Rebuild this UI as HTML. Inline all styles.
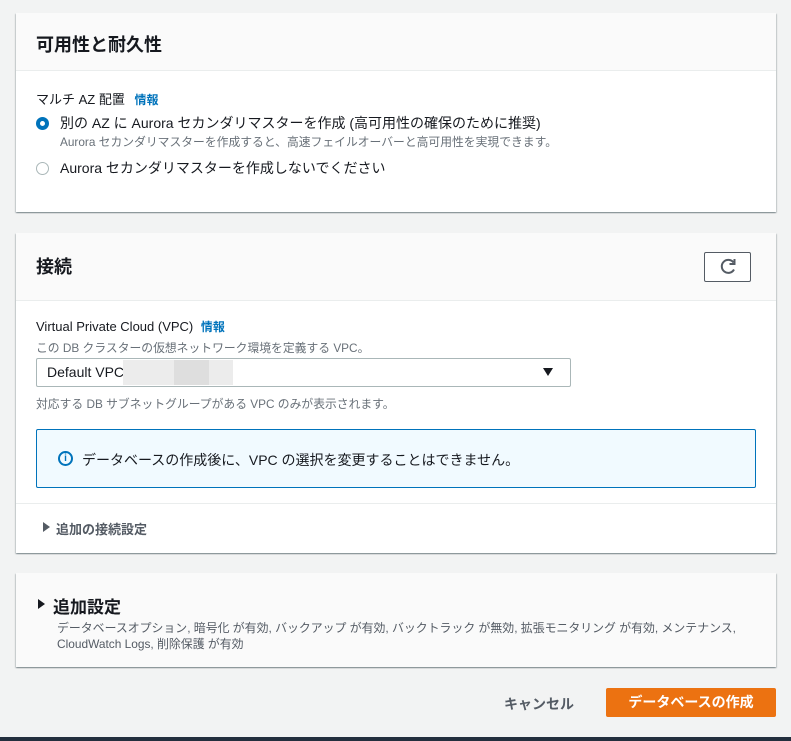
<!DOCTYPE html>
<html><head><meta charset="utf-8"><style>
*{margin:0;padding:0;box-sizing:border-box}
body{width:791px;height:741px;background:#f2f3f3;font-family:"Liberation Sans","Noto Sans CJK JP",sans-serif;color:#16191f;position:relative;overflow:hidden}
.a{position:absolute;white-space:nowrap}
.panel{position:absolute;left:16px;width:760px;background:#fff;box-shadow:0 1px 1px rgba(0,28,36,.3),1px 1px 1px rgba(0,28,36,.15),-1px 1px 1px rgba(0,28,36,.15)}
.hd{position:absolute;left:0;top:0;width:100%;background:#fafafa;border-bottom:1px solid #eaeded}
.h2{font-size:18px;font-weight:bold}
.lbl{font-size:14px}
.info{color:#0073bb;font-size:12px;font-weight:bold}
.desc{font-size:11.8px;color:#687078}
</style></head><body>
<div class="panel" style="top:13px;height:199px">
 <div class="hd" style="height:58px"></div>
 <div class="a h2" style="left:20px;top:18px">可用性と耐久性</div>
 <div class="a lbl" style="left:20px;top:76px;font-size:13px">マルチ AZ 配置 <span class="info" style="margin-left:6px">情報</span></div>
 <div class="a" style="left:20px;top:104px;width:13px;height:13px;border-radius:50%;border:4px solid #0073bb"></div>
 <div class="a lbl" style="left:44px;top:100px">別の AZ に Aurora セカンダリマスターを作成 (高可用性の確保のために推奨)</div>
 <div class="a desc" style="left:44px;top:120px">Aurora セカンダリマスターを作成すると、高速フェイルオーバーと高可用性を実現できます。</div>
 <div class="a" style="left:20px;top:149px;width:13px;height:13px;border-radius:50%;border:1px solid #aab7b8"></div>
 <div class="a lbl" style="left:44px;top:145px">Aurora セカンダリマスターを作成しないでください</div>
</div>
<div class="panel" style="top:233px;height:320px">
 <div class="hd" style="height:68px"></div>
 <div class="a h2" style="left:20px;top:20px">接続</div>
 <div class="a" style="left:688px;top:19px;width:47px;height:30px;border:1px solid #545b64;border-radius:2px;background:#fff">
  <svg width="47" height="30" viewBox="0 0 47 30" style="position:absolute;left:-1px;top:-1px"><path d="M29.5 10.5A6.5 6.5 0 1 0 30 17.5" fill="none" stroke="#545b64" stroke-width="2"/><path d="M30.5 7v5h-5" fill="none" stroke="#545b64" stroke-width="2"/></svg>
 </div>
 <div class="a lbl" style="left:20px;top:85px;font-size:13px">Virtual Private Cloud (VPC) <span class="info" style="margin-left:4px">情報</span></div>
 <div class="a desc" style="left:20px;top:106px">この DB クラスターの仮想ネットワーク環境を定義する VPC。</div>
 <div class="a" style="left:20px;top:125px;width:535px;height:29px;border:1px solid #aab7b8;border-radius:2px;background:#fff"></div>
 <div class="a lbl" style="left:31px;top:131px">Default VPC</div>
 <div class="a" style="left:107px;top:127px;width:110px;height:25px;background:#ececec"></div>
 <div class="a" style="left:158px;top:127px;width:35px;height:25px;background:#dedede"></div>
 <div class="a" style="left:527px;top:135px;width:0;height:0;border-left:5px solid transparent;border-right:5px solid transparent;border-top:8px solid #16191f"></div>
 <div class="a desc" style="left:20px;top:162px">対応する DB サブネットグループがある VPC のみが表示されます。</div>
 <div class="a" style="left:20px;top:196px;width:720px;height:59px;border:1px solid #0073bb;background:#f1faff;border-radius:2px"></div>
 <div class="a" style="left:42px;top:218px;width:15px;height:15px;border-radius:50%;border:2px solid #0073bb;font-size:10px;font-weight:bold;color:#0073bb;text-align:center;line-height:11px">i</div>
 <div class="a lbl" style="left:66px;top:217px">データベースの作成後に、VPC の選択を変更することはできません。</div>
 <div class="a" style="left:0;top:270px;width:760px;border-top:1px solid #eaeded"></div>
 <div class="a" style="left:27px;top:289px;width:0;height:0;border-top:5px solid transparent;border-bottom:5px solid transparent;border-left:7px solid #545b64"></div>
 <div class="a lbl" style="left:40px;top:286px;font-weight:bold;color:#545b64;font-size:13px">追加の接続設定</div>
</div>
<div class="panel" style="top:573px;height:94px;background:#fafafa">
 <div class="a" style="left:22px;top:26px;width:0;height:0;border-top:5px solid transparent;border-bottom:5px solid transparent;border-left:7px solid #16191f"></div>
 <div class="a h2" style="left:37px;top:20px;font-size:17px">追加設定</div>
 <div class="a desc" style="left:41px;top:46px;color:#545b64;font-size:11.9px">データベースオプション, 暗号化 が有効, バックアップ が有効, バックトラック が無効, 拡張モニタリング が有効, メンテナンス,</div>
 <div class="a desc" style="left:41px;top:62px;color:#545b64;font-size:11.9px">CloudWatch Logs, 削除保護 が有効</div>
</div>
<div class="a" style="left:504px;top:694px;font-size:14px;font-weight:bold;color:#545b64">キャンセル</div>
<div class="a" style="left:606px;top:688px;width:170px;height:29px;background:#ec7211;border-radius:2px;color:#fff;font-size:14px;font-weight:bold;text-align:center;line-height:29px">データベースの作成</div>
<div class="a" style="left:0;top:737px;width:791px;height:4px;background:#232f3e"></div>
</body></html>
